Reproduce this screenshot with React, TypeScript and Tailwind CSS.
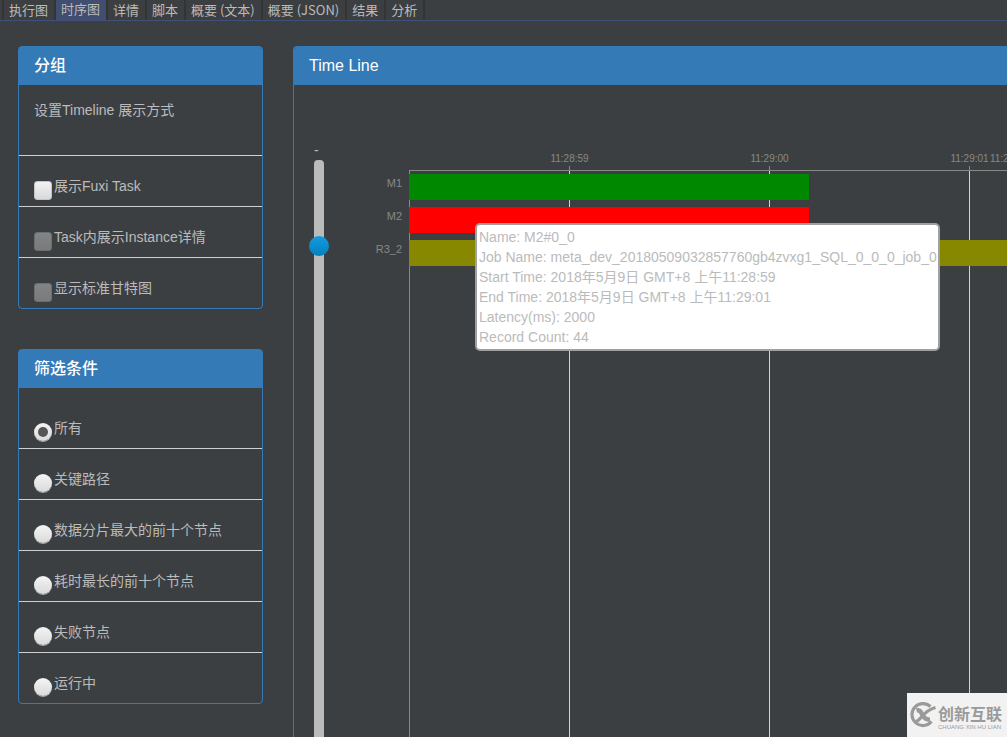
import { useState, type ReactNode } from "react";

const tabs = ["执行图", "时序图", "详情", "脚本", "概要 (文本)", "概要 (JSON)", "结果", "分析"];

const groupOptions = [
  { label: "展示Fuxi Task", disabled: false },
  { label: "Task内展示Instance详情", disabled: true },
  { label: "显示标准甘特图", disabled: true },
];

const filters = ["所有", "关键路径", "数据分片最大的前十个节点", "耗时最长的前十个节点", "失败节点", "运行中"];

const ticks = [
  { x: 225, label: "11:28:59" },
  { x: 425, label: "11:29:00" },
  { x: 625, label: "11:29:01" },
];

const tasks = [
  { name: "M1", y: 89, width: 400, color: "#008800" },
  { name: "M2", y: 122, width: 400, color: "#ff0000" },
  { name: "R3_2", y: 155, width: 600, color: "#888800" },
];

const details = [
  "Name: M2#0_0",
  "Job Name: meta_dev_20180509032857760gb4zvxg1_SQL_0_0_0_job_0",
  "Start Time: 2018年5月9日 GMT+8 上午11:28:59",
  "End Time: 2018年5月9日 GMT+8 上午11:29:01",
  "Latency(ms): 2000",
  "Record Count: 44",
];

function TabBar() {
  const [active, setActive] = useState(1);
  return (
    <nav
      role="tablist"
      className="flex h-[21px] shrink-0 border-b border-[#41507a] pl-[2px] font-['Noto_Sans_CJK_SC',sans-serif] text-[13px] leading-5 text-[#bbbbbb]"
    >
      {tabs.map((tab, i) => (
        <button
          key={tab}
          type="button"
          role="tab"
          aria-selected={i === active}
          onClick={() => setActive(i)}
          className={
            i === active
              ? "h-5 whitespace-nowrap border-l-2 border-[#323436] bg-[#414e70] pr-[6px] pb-[2px] pl-[5px] leading-[18px]"
              : "h-5 whitespace-nowrap border-l-2 border-[#323436] pr-[6px] pl-[5px]"
          }
        >
          {tab}
        </button>
      ))}
      <span className="h-5 border-l-2 border-[#323436]" />
    </nav>
  );
}

function Panel({ title, children }: { title: string; children: ReactNode }) {
  return (
    <section className="rounded border border-[#337ab7]">
      <h2 className="h-[38px] bg-[#337ab7] pl-[15px] text-base leading-[38px] font-medium text-white">{title}</h2>
      {children}
    </section>
  );
}

function GroupPanel() {
  return (
    <Panel title="分组">
      <p className="h-[70px] px-[15px] pt-[15px]">设置Timeline 展示方式</p>
      <ul>
        {groupOptions.map((option) => (
          <li key={option.label} className="h-[51px] border-t border-[#d0d0d0]">
            <label className="flex h-full items-end gap-[2px] pb-[6px] pl-[15px]">
              <input
                type="checkbox"
                disabled={option.disabled}
                className="h-[19px] w-[18px] appearance-none rounded-[3px] border border-[#c4c4c4] bg-linear-to-b from-[#f2f2f2] to-[#d9d9d9] checked:from-[#9ac7e8] checked:to-[#337ab7] disabled:border-[#6c6e6f] disabled:from-[#828384] disabled:to-[#7a7b7c]"
              />
              <span className="pb-1">{option.label}</span>
            </label>
          </li>
        ))}
      </ul>
    </Panel>
  );
}

function FilterPanel() {
  return (
    <Panel title="筛选条件">
      <ul className="pt-[10px]">
        {filters.map((filter, i) => (
          <li key={filter} className={i === 0 ? "h-[50px]" : "h-[51px] border-t border-[#d0d0d0]"}>
            <label className="flex h-full items-end gap-[2px] pb-[7px] pl-[15px]">
              <input
                type="radio"
                name="filter"
                defaultChecked={i === 0}
                className="grid size-[18px] appearance-none place-items-center rounded-full bg-linear-to-b from-[#f4f4f4] to-[#dadada] shadow-[0_1px_0_#aaaaaa] checked:before:size-[10px] checked:before:rounded-full checked:before:bg-[#555555] checked:before:content-['']"
              />
              <span className="pb-[3px]">{filter}</span>
            </label>
          </li>
        ))}
      </ul>
    </Panel>
  );
}

function Chart() {
  return (
    <svg className="h-full w-full" role="img" aria-label="Time Line">
      <g stroke="#888888" fill="none" shapeRendering="crispEdges">
        <path d="M65.5 85.5H665.5" />
        <line x1="65.5" x2="65.5" y1="85" y2="100%" />
      </g>
      {ticks.map((tick) => (
        <g key={tick.label} shapeRendering="crispEdges">
          <line x1={tick.x + 0.5} x2={tick.x + 0.5} y1="85" y2="100%" stroke="#d3d3d3" />
          <line x1={tick.x + 0.5} x2={tick.x + 0.5} y1="81" y2="86" stroke="#888888" />
          <text x={tick.x + 0.5} y="77" textAnchor="middle" fontSize="10" fill="#888888">
            {tick.label}
          </text>
        </g>
      ))}
      <text x="665" y="77" textAnchor="middle" fontSize="10" fill="#888888">
        11:29:01
      </text>
      {tasks.map((task) => (
        <g key={task.name}>
          <rect x="65" y={task.y} width={task.width} height="26" fill={task.color} />
          <text x="58" y={task.y + 13} textAnchor="end" fontSize="11" fill="#888888">
            {task.name}
          </text>
        </g>
      ))}
    </svg>
  );
}

function TimeLine() {
  return (
    <section className="flex min-w-0 flex-1 flex-col overflow-hidden rounded-tl border-t border-l border-[#337ab7]">
      <h2 className="h-[38px] shrink-0 bg-[#337ab7] pl-[15px] text-base leading-[38px] font-medium text-white">Time Line</h2>
      <div className="flex min-h-0 flex-1">
        <div className="flex w-[50px] shrink-0 flex-col pt-[55px] pl-5">
          <label htmlFor="zoom">-</label>
          <input
            id="zoom"
            type="range"
            defaultValue={11}
            className="h-[715px] w-[10px] shrink-0 appearance-none rounded bg-[#bbbbbb] [writing-mode:vertical-lr] [&::-webkit-slider-thumb]:-ml-px [&::-webkit-slider-thumb]:size-5 [&::-webkit-slider-thumb]:appearance-none [&::-webkit-slider-thumb]:rounded-full [&::-webkit-slider-thumb]:bg-linear-to-b [&::-webkit-slider-thumb]:from-[#149bdf] [&::-webkit-slider-thumb]:to-[#0480be]"
          />
        </div>
        <div className="relative min-w-0 flex-1">
          <Chart />
          <div
            role="tooltip"
            className="absolute top-[138px] left-[131px] rounded-[5px] border-2 border-[#a0a0a0] bg-white py-[2px] pr-px pl-[2px] whitespace-nowrap"
          >
            {details.map((line) => (
              <p key={line}>{line}</p>
            ))}
          </div>
        </div>
      </div>
    </section>
  );
}

function Brand() {
  return (
    <div className="absolute right-0 bottom-0 flex h-11 w-[100px] items-center gap-[2px] bg-[#f2f2f2] pl-[2px] text-[#9a9a9a]">
      <svg viewBox="0 0 27 26" className="h-[26px] w-[27px] shrink-0" fill="none" stroke="currentColor">
        <path d="M21.500 4.500A11 11 0 1 0 22.500 19.500" strokeWidth="3.200" />
        <path d="M7.500 8.500C11.500 7.500 12 10.500 13.500 13S16.500 18 21 17.500" strokeWidth="4.500" />
        <path d="M7 19.500C12.500 18 13.500 9 26.500 5.500" strokeWidth="3.200" />
      </svg>
      <div className="pt-[3px] font-['Noto_Sans_CJK_SC',sans-serif] whitespace-nowrap">
        <p className="text-base leading-5 font-bold">创新互联</p>
        <p className="font-['Liberation_Sans',sans-serif] text-[6px] leading-2">CHUANG XIN HU LIAN</p>
      </div>
    </div>
  );
}

export default function App() {
  return (
    <div className="relative flex h-screen flex-col overflow-hidden bg-[#3c3f41] font-['Liberation_Sans','Noto_Sans_CJK_SC',sans-serif] text-sm leading-5 text-[#bbbbbb]">
      <TabBar />
      <main className="flex min-h-0 flex-1 gap-[30px] pt-[25px] pl-[18px]">
        <aside className="flex w-[245px] shrink-0 flex-col gap-10">
          <GroupPanel />
          <FilterPanel />
        </aside>
        <TimeLine />
      </main>
      <Brand />
    </div>
  );
}
